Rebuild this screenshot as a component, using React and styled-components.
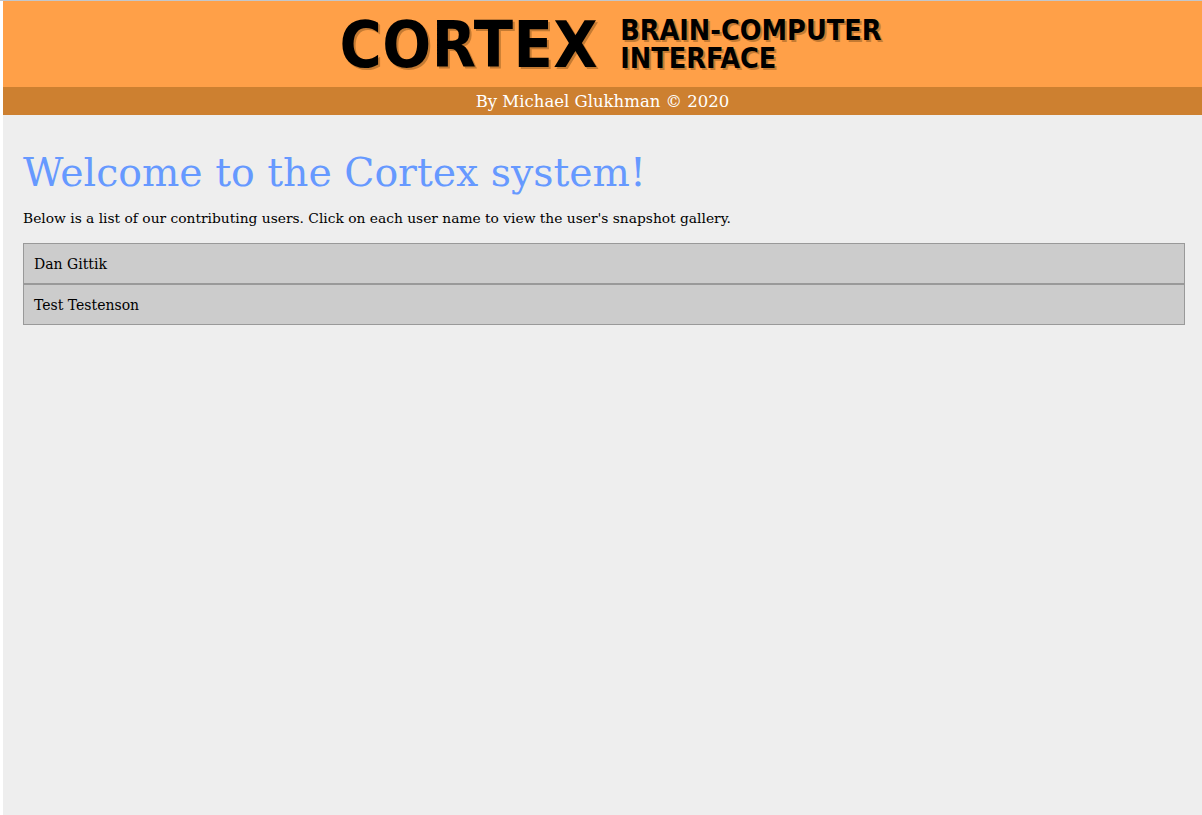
import React from "react";
import styled, { createGlobalStyle } from "styled-components";

const GlobalStyle = createGlobalStyle`
  html, body {
    margin: 0;
    padding: 0;
    background: #ffffff;
  }
  body {
    border-top: 1px solid #c3c7cb;
    padding-left: 3px;
    font-family: "DejaVu Serif", "Liberation Serif", serif;
  }
`;

const Page = styled.div`
  min-height: calc(100vh - 1px);
  background: #eeeeee;
  display: flex;
  flex-direction: column;
`;

const Header = styled.header`
  background: #ffa048;
  height: 86px;
  display: flex;
  align-items: center;
  justify-content: center;
  gap: 22px;
  padding-left: 16px;
  color: #000;
`;

const Logo = styled.div`
  font-family: "DejaVu Sans Condensed", "DejaVu Sans", sans-serif;
  font-weight: bold;
  font-size: 64px;
  line-height: 1;
  letter-spacing: 0.5px;
  text-shadow: 2px 2px 0 #c47a32;
  margin-top: 2px;
`;

const Tagline = styled.div`
  display: flex;
  flex-direction: column;
  margin-top: 2px;
`;

const TaglineLine = styled.span`
  font-family: "DejaVu Sans Condensed", "DejaVu Sans", sans-serif;
  font-weight: bold;
  font-size: 28.5px;
  line-height: 28px;
  height: 28px;
  overflow: visible;
  text-shadow: 2px 2px 0 #c47a32;
`;

const Byline = styled.div`
  background: #cd8030;
  height: 28px;
  color: #ffffff;
  font-size: 16.5px;
  display: flex;
  align-items: center;
  justify-content: center;
`;

const Main = styled.main`
  padding: 30px 17px 20px 20px;
`;

const Title = styled.h1`
  margin: 0;
  color: #6699ff;
  font-family: "DejaVu Serif", serif;
  font-weight: normal;
  font-size: 39.4px;
  line-height: 54px;
`;

const Intro = styled.p`
  margin: 11px 0 17px;
  font-size: 13.8px;
  color: #000;
`;

const UserList = styled.ul`
  list-style: none;
  margin: 0;
  padding: 0;
`;

const UserItem = styled.li`
  background: #cccccc;
  border: 1px solid #999999;
  height: 39px;
  padding: 0 10px;
  display: flex;
  align-items: center;
  font-size: 14px;
  color: #000;
  cursor: pointer;
`;

const users = ["Dan Gittik", "Test Testenson"];

export default function App() {
  return (
    <>
      <GlobalStyle />
      <Page>
        <Header>
          <Logo>CORTEX</Logo>
          <Tagline>
            <TaglineLine>BRAIN-COMPUTER</TaglineLine>
            <TaglineLine>INTERFACE</TaglineLine>
          </Tagline>
        </Header>
        <Byline>By Michael Glukhman © 2020</Byline>
        <Main>
          <Title>Welcome to the Cortex system!</Title>
          <Intro>
            Below is a list of our contributing users. Click on each user name
            to view the user's snapshot gallery.
          </Intro>
          <UserList>
            {users.map((u) => (
              <UserItem key={u}>{u}</UserItem>
            ))}
          </UserList>
        </Main>
      </Page>
    </>
  );
}
